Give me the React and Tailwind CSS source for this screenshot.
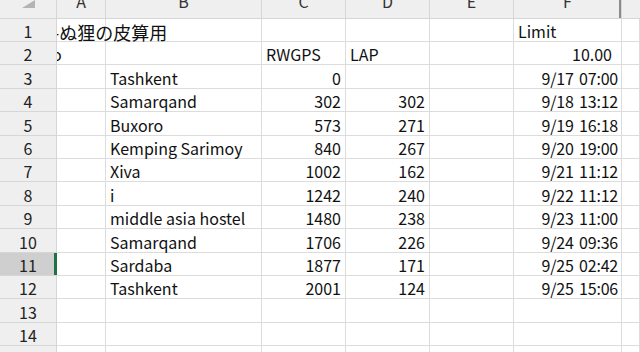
const FONT = "font-['Noto_Sans_CJK_JP','Noto_Sans',sans-serif]";

const COLS = ["A", "B", "C", "D", "E", "F", ""];
const HEIGHTS = [23, 23, 24, 23, 24, 23, 23, 24, 23, 24, 23, 23, 24, 23, 23];

const DATA = [
  ["Tashkent", "0", "", "9/17 07:00"],
  ["Samarqand", "302", "302", "9/18 13:12"],
  ["Buxoro", "573", "271", "9/19 16:18"],
  ["Kemping Sarimoy", "840", "267", "9/20 19:00"],
  ["Xiva", "1002", "162", "9/21 11:12"],
  ["i", "1242", "240", "9/22 11:12"],
  ["middle asia hostel", "1480", "238", "9/23 11:00"],
  ["Samarqand", "1706", "226", "9/24 09:36"],
  ["Sardaba", "1877", "171", "9/25 02:42"],
  ["Tashkent", "2001", "124", "9/25 15:06"],
];

function rowCells(r) {
  // seven cells, columns A..G
  if (r === 1) {
    return [{ text: "-ぬ狸の皮算用", title: true }, {}, {}, {}, {}, { text: "Limit" }, {}];
  }
  if (r === 2) {
    return [
      { text: "o", clipLeft: true },
      {},
      { text: "RWGPS" },
      { text: "LAP" },
      {},
      { text: "10.00", right: true, pad: "pr-[9px]" },
      {},
    ];
  }
  const d = DATA[r - 3];
  if (!d) return [{}, {}, {}, {}, {}, {}, {}];
  return [
    {},
    { text: d[0] },
    { text: d[1], right: true },
    { text: d[2], right: true },
    {},
    { text: d[3], right: true, pad: "pr-[3px] tracking-[-0.2px] [word-spacing:2px]" },
    {},
  ];
}

function Corner() {
  return (
    <div className="h-[19px] bg-[#efefef] border-r border-b border-[#d6d6d6] flex items-start justify-end pr-[21px]">
      <svg width="13" height="8" viewBox="0 0 13 8">
        <polygon points="13,0 13,8 0,8" fill="#b4b4b4" />
      </svg>
    </div>
  );
}

function ColHead({ label, last }) {
  return (
    <div
      className={`relative h-[19px] bg-[#efefef] border-b border-[#d6d6d6] overflow-hidden flex items-end justify-center ${
        last ? "" : "border-r"
      }`}
    >
      <span className="text-[16px] leading-[16px] mb-[9px] text-[#333]">{label}</span>
      {label === "F" && <div className="absolute right-[-1px] top-0 w-[3px] h-full bg-[#8c8c8c]" />}
    </div>
  );
}

function Cell({ cell, h }) {
  const base = "border-r border-b border-[#dcdcdc] whitespace-nowrap text-[16px] text-[#111]";
  if (!cell.text) return <div className={base} style={{ height: h }} />;
  if (cell.title) {
    return (
      <div
        className={`${base} flex items-end z-10 [clip-path:inset(0_-400px_0_0)]`}
        style={{ height: h }}
      >
        <span className="ml-[-4px] text-[18px] leading-[18px]">{cell.text}</span>
      </div>
    );
  }
  if (cell.clipLeft) {
    return (
      <div className={`${base} overflow-hidden flex items-end`} style={{ height: h }}>
        <span className="ml-[-5px] leading-[19px]">{cell.text}</span>
      </div>
    );
  }
  return (
    <div
      className={`${base} flex items-end leading-[19px] ${
        cell.right ? "justify-end" : "justify-start"
      } ${cell.pad || (cell.right ? "pr-[4px]" : "pl-[4px]")}`}
      style={{ height: h }}
    >
      {cell.text}
    </div>
  );
}

export default function App() {
  const rows = Array.from({ length: 15 }, (_, i) => i + 1);
  return (
    <div className={`w-[640px] h-[352px] overflow-hidden bg-white ${FONT}`}>
      <div className="grid grid-cols-[57px_49px_156px_84px_84px_84px_108px_1fr]">
        <Corner />
        {COLS.map((c, i) => (
          <ColHead key={i} label={c} last={i === COLS.length - 1} />
        ))}
        {rows.map((r) => {
          const h = HEIGHTS[r - 1];
          const selected = r === 11;
          return [
            <div
              key={`h${r}`}
              className={`relative border-r border-b border-[#d6d6d6] flex items-end justify-center text-[16px] leading-[20px] text-[#222] ${
                selected ? "bg-[#cfcfcf]" : "bg-[#efefef]"
              }`}
              style={{ height: h }}
            >
              {r}
              {selected && <div className="absolute right-[-1px] top-0 w-[3px] h-full bg-[#1e7145]" />}
            </div>,
            ...rowCells(r).map((cell, i) => <Cell key={`${r}-${i}`} cell={cell} h={h} />),
          ];
        })}
      </div>
    </div>
  );
}
